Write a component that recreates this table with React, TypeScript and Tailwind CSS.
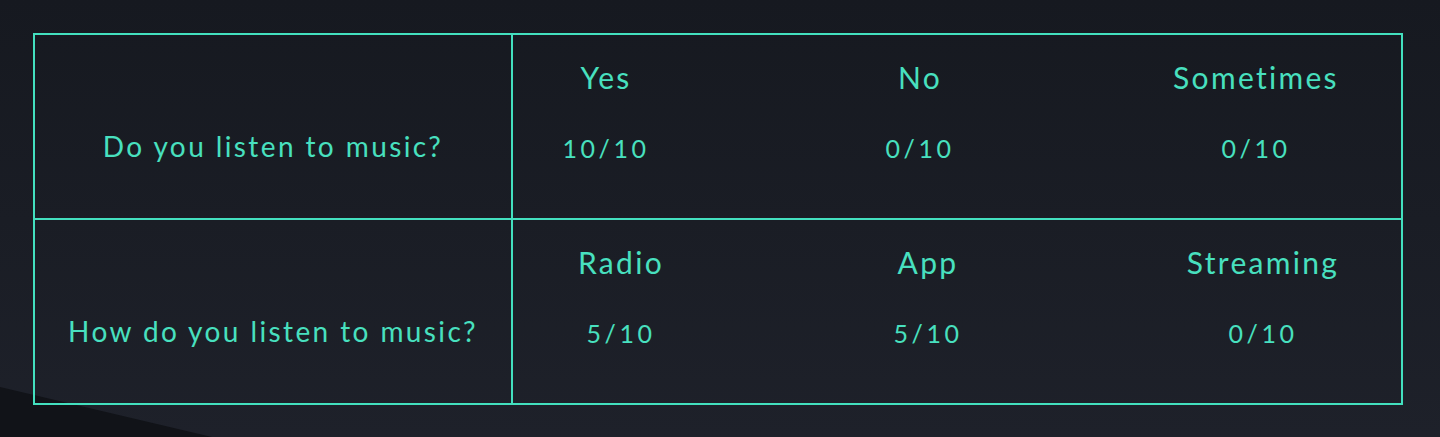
import React from 'react';

type Answer = { label: string; score: string };

type Row = {
  question: string;
  cols: string;
  answers: Answer[];
};

const rows: Row[] = [
  {
    question: 'Do you listen to music?',
    cols: 'grid-cols-[186px_442px_230px]',
    answers: [
      { label: 'Yes', score: '10/10' },
      { label: 'No', score: '0/10' },
      { label: 'Sometimes', score: '0/10' },
    ],
  },
  {
    question: 'How do you listen to music?',
    cols: 'grid-cols-[216px_398px_272px]',
    answers: [
      { label: 'Radio', score: '5/10' },
      { label: 'App', score: '5/10' },
      { label: 'Streaming', score: '0/10' },
    ],
  },
];

function SurveyRow({ row, first }: { row: Row; first: boolean }) {
  return (
    <div
      className={`grid grid-cols-[478px_1fr] ${first ? 'h-[183px]' : 'h-[185px] border-t-2 border-[#43e0bf]'}`}
    >
      <div className="border-r-2 border-[#43e0bf] pt-[95px] text-center text-[28px] leading-[32px] tracking-[2.4px]">
        {row.question}
      </div>
      <div className={`grid ${row.cols} pt-[26px]`}>
        {row.answers.map((a) => (
          <div key={a.label} className="flex flex-col items-center">
            <span className="text-[30px] leading-[32px] tracking-[2.3px]">{a.label}</span>
            <span className="mt-[39px] text-[25px] leading-[32px] tracking-[3.5px]">{a.score}</span>
          </div>
        ))}
      </div>
    </div>
  );
}

export default function App() {
  return (
    <div className="relative h-[437px] overflow-hidden bg-gradient-to-b from-[#161920] to-[#1e212a] font-['Lato','Noto_Sans',sans-serif] text-[#48e0bf]">
      <svg className="absolute inset-0 h-full w-full" viewBox="0 0 1440 437" preserveAspectRatio="none">
        <polygon points="0,387 212,437 0,437" fill="#111318" />
      </svg>
      <div className="relative px-[33px] pt-[33px]">
        <div className="w-[1370px] border-2 border-[#43e0bf]">
          {rows.map((r, i) => (
            <SurveyRow key={r.question} row={r} first={i === 0} />
          ))}
        </div>
      </div>
    </div>
  );
}
